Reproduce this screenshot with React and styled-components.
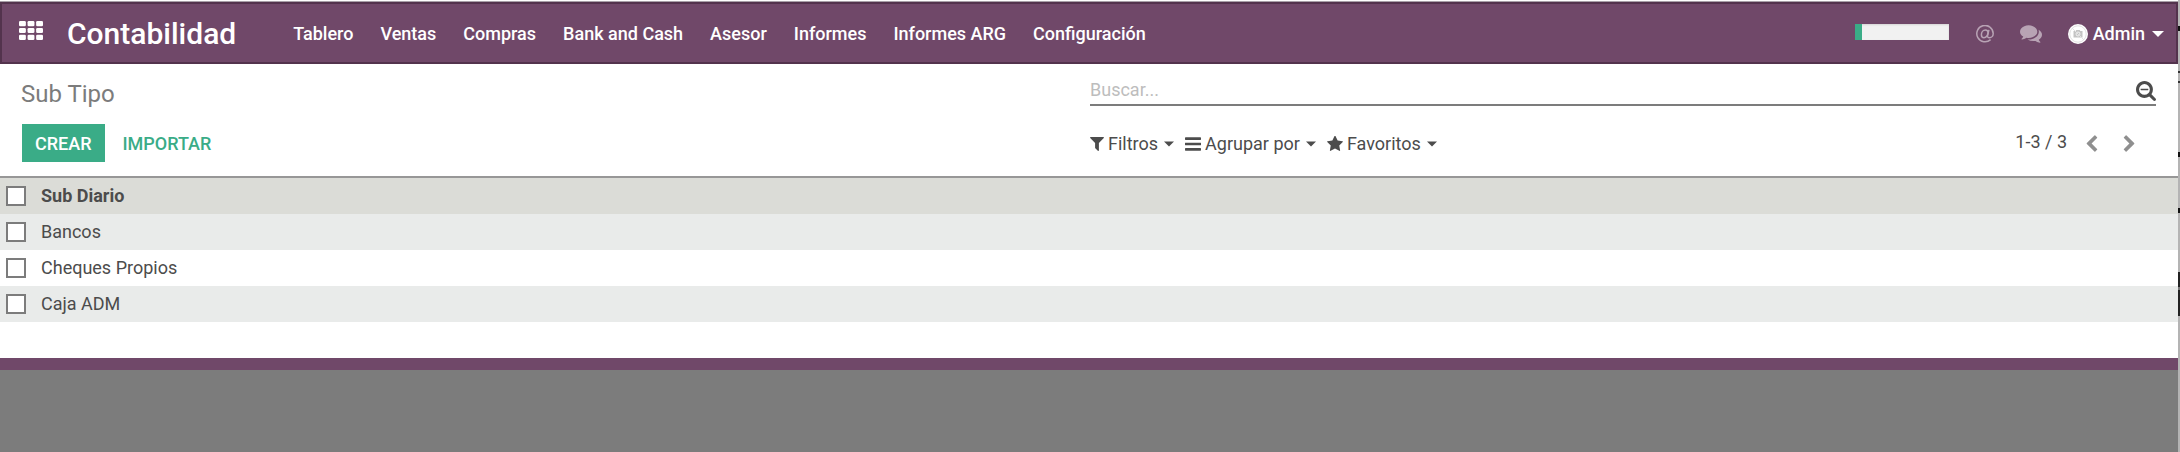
import React from "react";
import styled, { createGlobalStyle } from "styled-components";

const color = {
  brand: "#704869",
  brandDark: "#53334d",
  accent: "#3aac87",
  text: "#4c4c4c",
  muted: "#7c7c7c",
  line: "#979797",
};

const GlobalStyle = createGlobalStyle`
  *, *::before, *::after { box-sizing: border-box; }
  body { margin: 0; background: #fff; }
  body, button, input, table { font-family: Roboto, "Liberation Sans", sans-serif; font-size: 18px; }
  button { margin: 0; padding: 0; border: 0; background: none; color: inherit; cursor: pointer; }
`;

const Page = styled.div`
  min-height: 100vh;
  display: flex;
  flex-direction: column;
  padding: 2px 2px 0 0;
  color: ${color.text};
  background:
    linear-gradient(
      #b4b4b4 26px, #111 26px 31px, #b4b4b4 31px 71px, #333 71px 73px, #b4b4b4 73px 81px,
      #333 81px 83px, #b4b4b4 83px 152px, #111 152px 157px, #b4b4b4 157px 208px,
      #111 208px 213px, #b4b4b4 213px 272px, #222 272px 287px, #777 287px 290px,
      #222 290px 316px, #b4b4b4 316px
    ) right top / 2px 100% no-repeat,
    #fff;
`;

const Header = styled.header`
  display: flex;
  align-items: center;
  height: 62px;
  padding: 1px 12px 0 17px;
  color: #fff;
  background: ${color.brand};
  border: 2px solid ${color.brandDark};
  box-shadow: 0 -1px 0 #a8a0a8;
`;

const AppsButton = styled.button`
  display: flex;
  margin: 0 24px 6px 0;
`;

const Brand = styled.a`
  margin-right: 57px;
  font-size: 30px;
  font-weight: 500;
  line-height: 36px;
  color: #fff;
  text-decoration: none;
`;

const Menu = styled.nav`
  display: flex;
  flex: 1;
  gap: 27px;
`;

const MenuLink = styled.a`
  font-weight: 500;
  line-height: 24px;
  color: #fff;
  text-decoration: none;
  white-space: nowrap;
`;

const Systray = styled.div`
  display: flex;
  align-items: center;
`;

const Progress = styled.div`
  width: 94px;
  height: 16px;
  margin: 0 27px 3px 0;
  background: #f1f1f1;
  box-shadow: inset 0 1px 2px rgba(0, 0, 0, 0.12);
`;

const ProgressFill = styled.div`
  height: 100%;
  background: ${color.accent};
`;

const TrayButton = styled.button`
  display: flex;
  margin-right: 26px;
  color: #b8a3b4;
`;

const UserButton = styled.button`
  display: flex;
  align-items: center;
  font-weight: 500;
  line-height: 24px;
`;

const UserName = styled.span`
  margin: 0 7px 0 5px;
`;

const ControlPanel = styled.section`
  display: grid;
  grid-template-columns: 1fr 1fr;
  grid-template-rows: 36px 38px;
  row-gap: 12px;
  padding: 12px 0 14px 2px;
  border-bottom: 2px solid ${color.line};
`;

const Title = styled.h1`
  margin: 0;
  padding-left: 19px;
  font-size: 24px;
  font-weight: 400;
  line-height: 36px;
  color: ${color.muted};
`;

const Search = styled.form`
  display: flex;
  align-items: flex-end;
  height: 30px;
  margin-right: 22px;
  border-bottom: 2px solid ${color.muted};
`;

const SearchInput = styled.input`
  flex: 1;
  height: 28px;
  padding: 0 0 2px;
  border: 0;
  outline: 0;
  background: transparent;
  color: ${color.text};
  &::placeholder { color: #bdbdbd; opacity: 1; }
`;

const SearchToggle = styled.button`
  display: flex;
  padding-bottom: 3px;
`;

const Actions = styled.div`
  display: flex;
  padding-left: 20px;
`;

const ActionButton = styled.button`
  height: 38px;
  padding: 0 ${(p) => (p.$primary ? 13 : 18)}px;
  font-weight: 500;
  text-transform: uppercase;
  color: ${(p) => (p.$primary ? "#fff" : color.accent)};
  background: ${(p) => (p.$primary ? color.accent : "transparent")};
`;

const SearchTools = styled.div`
  display: flex;
  align-items: center;
  justify-content: space-between;
  padding-right: 43px;
`;

const Filters = styled.div`
  display: flex;
  gap: 11px;
  padding-top: 1px;
`;

const FilterButton = styled.button`
  display: flex;
  align-items: center;
  gap: 4px;
  line-height: 24px;
`;

const FilterLabel = styled.span`
  margin-right: 2px;
`;

const Pager = styled.div`
  display: flex;
  align-items: center;
  line-height: 24px;
`;

const PagerCount = styled.span`
  padding-bottom: 2px;
`;

const PagerButton = styled.button`
  display: flex;
  margin-left: ${(p) => (p.$first ? 19 : 25)}px;
  color: #8f8f8f;
`;

const List = styled.table`
  width: 100%;
  border-collapse: collapse;
`;

const Row = styled.tr`
  height: 36px;
  background: ${(p) => p.$bg};
`;

const CheckCell = styled.td`
  width: 41px;
  padding: 0 0 0 6px;
`;

const HeadCell = styled.th`
  padding: 0 0 2px;
  font-weight: 700;
  text-align: left;
`;

const Cell = styled.td`
  padding: 0 0 2px;
`;

const Checkbox = styled.input`
  appearance: none;
  display: block;
  width: 20px;
  height: 20px;
  margin: 0;
  border: 2px solid ${color.muted};
  background: #fff;
  &:checked { background: ${color.accent}; }
`;

const Footer = styled.footer`
  flex: 1;
  margin-top: 36px;
  border-top: 12px solid ${color.brand};
  background: #7c7c7c;
`;

const Glyph = ({ d, width, height, box = "0 0 1792 1792" }) => (
  <svg width={width} height={height} viewBox={box} fill="currentColor" aria-hidden="true">
    <path d={d} />
  </svg>
);

const Caret = ({ width = 10, height = 6 }) => (
  <Glyph width={width} height={height} box="0 0 10 5" d="M0 0H10L5 5Z" />
);

const filterPath =
  "M1595 295q17 41-14 70l-493 493v742q0 42-39 59-13 5-25 5-27 0-45-19l-256-256q-19-19-19-45v-486l-493-493q-31-29-14-70 17-39 59-39h1280q42 0 59 39z";
const barsPath =
  "M1664 1344v128q0 26-19 45t-45 19h-1408q-26 0-45-19t-19-45v-128q0-26 19-45t45-19h1408q26 0 45 19t19 45zm0-512v128q0 26-19 45t-45 19h-1408q-26 0-45-19t-19-45v-128q0-26 19-45t45-19h1408q26 0 45 19t19 45zm0-512v128q0 26-19 45t-45 19h-1408q-26 0-45-19t-19-45v-128q0-26 19-45t45-19h1408q26 0 45 19t19 45z";
const starPath =
  "M1728 647q0 22-26 48l-363 354 86 500q1 7 1 20 0 21-10.5 35.5t-30.5 14.5q-19 0-40-12l-449-236-449 236q-22 12-40 12-21 0-31.5-14.5t-10.5-35.5q0-6 2-20l86-500-364-354q-25-27-25-48 0-37 56-46l502-73 225-455q19-41 49-41t49 41l225 455 502 73q56 9 56 46z";
const commentsPath =
  "M1408 768q0 139-94 257t-256.5 186.5-353.5 68.5q-86 0-176-16-124 88-278 128-36 9-86 16h-3q-11 0-20.5-8t-11.5-21q-1-3-1-6.5t.5-6.5 2-6l2.5-5 3.5-5.5 4-5 4.5-5 4-4.5q5-6 23-25t26-29.5 22.5-29 25-38.5 20.5-44q-124-72-195-177t-71-224q0-139 94-257t256.5-186.5 353.5-68.5 353.5 68.5 256.5 186.5 94 257zm384 256q0 120-71 224.5t-195 176.5q10 24 20.5 44t25 38.5 22.5 29 26 29.5 23 25q1 1 4 4.5t4.5 5 4 5 3.5 5.5l2.5 5 2 6 .5 6.5-1 6.5q-3 14-13 22t-22 7q-50-7-86-16-154-40-278-128-90 16-176 16-271 0-472-132 58 4 88 4 161 0 309-45t264-129q125-92 192-212t67-254q0-77-23-152 129 71 204 178t75 230z";
const searchMinusPath =
  "M1088 800v64q0 13-9.5 22.5t-22.5 9.5h-576q-13 0-22.5-9.5t-9.5-22.5v-64q0-13 9.5-22.5t22.5-9.5h576q13 0 22.5 9.5t9.5 22.5zm128 32q0-185-131.5-316.5t-316.5-131.5-316.5 131.5-131.5 316.5 131.5 316.5 316.5 131.5 316.5-131.5 131.5-316.5zm512 832q0 53-37.5 90.5t-90.5 37.5q-54 0-90-38l-343-342q-179 124-399 124-143 0-273.5-55.5t-225-150-150-225-55.5-273.5 55.5-273.5 150-225 225-150 273.5-55.5 273.5 55.5 225 150 150 225 55.5 273.5q0 220-124 399l343 343q37 37 37 90z";
const chevronLeftPath =
  "M1427 301l-531 531 531 531q19 19 19 45t-19 45l-166 166q-19 19-45 19t-45-19l-742-742q-19-19-19-45t19-45l742-742q19-19 45-19t45 19l166 166q19 19 19 45t-19 45z";

const AppsIcon = () => (
  <svg width="24" height="19" viewBox="0 128 1792 1408" fill="currentColor" aria-hidden="true">
    {[128, 640, 1152].map((y) =>
      [0, 640, 1280].map((x) => <rect key={`${x}-${y}`} x={x} y={y} width="512" height="384" rx="96" />)
    )}
  </svg>
);

const AtIcon = () => (
  <svg width="18" height="18" viewBox="0 0 18 18" fill="none" stroke="currentColor" strokeWidth="1.5" aria-hidden="true">
    <path d="M14.6 14.6A8.2 8.2 0 1 1 17.2 8.4C17.2 11 15.4 12.7 13.4 12.7C11.9 12.7 11.3 11.8 11.6 10.6L12.9 4.9" />
    <path d="M12.1 7.7C11.9 6 10.9 5.1 9.4 5.1C7 5.1 5.4 7.3 5.4 9.7C5.4 11.5 6.4 12.7 8 12.7C10 12.7 11.5 11 12.1 7.7Z" />
  </svg>
);

const Avatar = () => (
  <svg width="20" height="20" viewBox="0 0 20 20" aria-hidden="true">
    <circle cx="10" cy="10" r="10" fill="#fff" />
    <circle cx="10" cy="10" r="8.2" fill="none" stroke="#e2e2e2" />
    <path d="M5.5 7H7.6L8.4 6H11.6L12.4 7H14.5V13.5H5.5Z" fill="#c4c4c4" />
    <circle cx="10" cy="10" r="2" fill="none" stroke="#f1f1f1" />
    <path d="M4 4L16 16" stroke="#e2e2e2" />
  </svg>
);

const ChevronIcon = ({ right }) => (
  <svg width="12" height="17" viewBox="384 0 1100 1664" fill="currentColor" aria-hidden="true">
    <path d={chevronLeftPath} transform={right ? "translate(1868 0) scale(-1 1)" : undefined} />
  </svg>
);

const menuItems = ["Tablero", "Ventas", "Compras", "Bank and Cash", "Asesor", "Informes", "Informes ARG", "Configuración"];
const records = ["Bancos", "Cheques Propios", "Caja ADM"];
const progress = 8;

const filters = [
  { label: "Filtros", icon: <Glyph d={filterPath} width={14} height={14} box="190 256 1412 1412" /> },
  { label: "Agrupar por", icon: <Glyph d={barsPath} width={16} height={14} box="128 256 1536 1280" /> },
  { label: "Favoritos", icon: <Glyph d={starPath} width={16} height={16} box="64 100 1664 1600" /> },
];

export default function App() {
  return (
    <Page>
      <GlobalStyle />
      <Header>
        <AppsButton type="button" aria-label="Aplicaciones"><AppsIcon /></AppsButton>
        <Brand href="#contabilidad">Contabilidad</Brand>
        <Menu>
          {menuItems.map((item) => <MenuLink key={item} href="#menu">{item}</MenuLink>)}
        </Menu>
        <Systray>
          <Progress role="progressbar" aria-label="Progreso" aria-valuenow={progress} aria-valuemin={0} aria-valuemax={100}>
            <ProgressFill style={{ width: `${progress}%` }} />
          </Progress>
          <TrayButton type="button" aria-label="Menciones"><AtIcon /></TrayButton>
          <TrayButton type="button" aria-label="Conversaciones">
            <Glyph d={commentsPath} width={22} height={18} box="0 256 1792 1408" />
          </TrayButton>
          <UserButton type="button">
            <Avatar />
            <UserName>Admin</UserName>
            <Caret width={12} />
          </UserButton>
        </Systray>
      </Header>
      <ControlPanel>
        <Title>Sub Tipo</Title>
        <Search role="search">
          <SearchInput type="text" placeholder="Buscar..." aria-label="Buscar" />
          <SearchToggle type="button" aria-label="Búsqueda avanzada">
            <Glyph d={searchMinusPath} width={20} height={20} box="64 128 1664 1664" />
          </SearchToggle>
        </Search>
        <Actions>
          <ActionButton type="button" $primary>Crear</ActionButton>
          <ActionButton type="button">Importar</ActionButton>
        </Actions>
        <SearchTools>
          <Filters>
            {filters.map(({ label, icon }) => (
              <FilterButton key={label} type="button">
                {icon}
                <FilterLabel>{label}</FilterLabel>
                <Caret />
              </FilterButton>
            ))}
          </Filters>
          <Pager>
            <PagerCount>1-3 / 3</PagerCount>
            <PagerButton type="button" aria-label="Anterior" $first><ChevronIcon /></PagerButton>
            <PagerButton type="button" aria-label="Siguiente"><ChevronIcon right /></PagerButton>
          </Pager>
        </SearchTools>
      </ControlPanel>
      <List>
        <thead>
          <Row $bg="#dbdcd7">
            <CheckCell><Checkbox type="checkbox" aria-label="Seleccionar todo" /></CheckCell>
            <HeadCell scope="col">Sub Diario</HeadCell>
          </Row>
        </thead>
        <tbody>
          {records.map((name, i) => (
            <Row key={name} $bg={i % 2 ? "#fff" : "#e9ebea"}>
              <CheckCell><Checkbox type="checkbox" aria-label={name} /></CheckCell>
              <Cell>{name}</Cell>
            </Row>
          ))}
        </tbody>
      </List>
      <Footer />
    </Page>
  );
}
